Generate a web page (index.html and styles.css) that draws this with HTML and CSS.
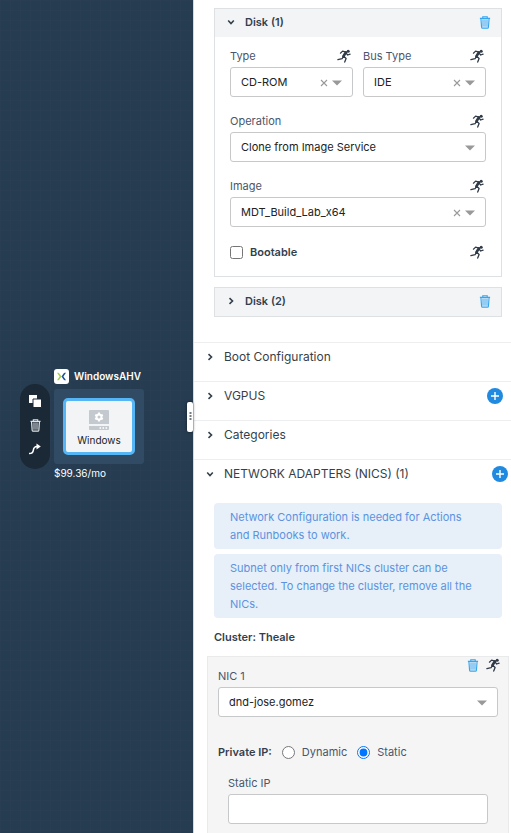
FILE: index.html
```html
<!DOCTYPE html>
<html lang="en">
<head>
<meta charset="utf-8">
<meta name="viewport" content="width=device-width, initial-scale=1">
<title>Blueprint editor</title>
<link rel="stylesheet" href="styles.css">
</head>
<body>
<svg class="sprite" aria-hidden="true">
  <symbol id="trash" viewBox="0 0 12 14">
    <path d="M2.8 3.6h6.4v8H2.8z" fill="currentColor" opacity=".5"/>
    <path d="M.5 2.5h11M3.6 2.3V.8h4.8v1.5M1.6 2.8l.7 9.2q.1 1.1 1.1 1.1h5.2q1 0 1.1-1.1l.7-9.2" fill="none" stroke="currentColor" stroke-width="1.2"/>
  </symbol>
  <symbol id="runner" viewBox="0 0 14 14">
    <circle cx="11.2" cy="2.3" r="1.5" fill="currentColor"/>
    <path d="M3.4 4.2 5.6 2.1 9 3.1" fill="none" stroke="currentColor" stroke-width="1.2" stroke-linecap="round" stroke-linejoin="round"/>
    <path d="M9 3.3 6.4 7.2" fill="none" stroke="currentColor" stroke-width="2.6" stroke-linecap="round"/>
    <path d="M9.3 4.3 10.7 6l2.4-.8M6.4 7.4 5.1 9.7.9 10.6M6.8 7.3l2.3 2.1-1.4 3.7" fill="none" stroke="currentColor" stroke-width="1.3" stroke-linecap="round" stroke-linejoin="round"/>
  </symbol>
  <symbol id="chevron" viewBox="0 0 8 8">
    <path d="M2.5 1.2 5.5 4 2.5 6.8" fill="none" stroke="currentColor" stroke-width="1.6"/>
  </symbol>
  <symbol id="caret" viewBox="0 0 10 6"><path d="M0 .5h10L5 5.5z" fill="currentColor"/></symbol>
  <symbol id="clear" viewBox="0 0 8 8"><path d="m1 1 6 6M7 1 1 7" stroke="currentColor" stroke-width="1.1"/></symbol>
  <symbol id="plus" viewBox="0 0 16 16">
    <circle cx="8" cy="8" r="8" fill="#2089e0"/>
    <path d="M8 4v8M4 8h8" stroke="#fff" stroke-width="1.4"/>
  </symbol>
</svg>

<div class="editor">
  <main class="canvas">
    <div class="node">
      <div class="node-title">
        <svg class="logo" viewBox="0 0 15 15" aria-hidden="true">
          <rect width="15" height="15" rx="3" fill="#fff"/>
          <path d="M3 3.800h1.300q.7 0 1.100.6l2.100 3.100-2.100 3.100q-.4.6-1.100.6H3l2.600-3.700z" fill="#a4cf4c"/>
          <path d="M12 3.800h-1.300q-.7 0-1.100.6L7.500 7.500l2.100 3.100q.4.6 1.100.6H12L9.400 7.500z" fill="#17509c"/>
        </svg>
        <span>WindowsAHV</span>
      </div>
      <div class="toolbar">
        <button type="button" aria-label="Copy"><svg width="14" height="14" viewBox="0 0 14 14"><path d="M1 1h8v8H1z" fill="#fff"/><path d="M5 5h8.500v8.500H5z" fill="#fff" stroke="#1b2836"/></svg></button>
        <button type="button" aria-label="Delete"><svg class="tool-trash"><use href="#trash"/></svg></button>
        <button type="button" aria-label="Connect"><svg width="14" height="12" viewBox="0 0 14 12"><path d="M1 10.500q3.800.1 4.300-3.200Q5.800 3.600 9 3.500" fill="none" stroke="#fff" stroke-width="1.500"/><path d="m8.500.6 4.300 2.900-4.300 2.900z" fill="#fff"/></svg></button>
      </div>
      <div class="card">
        <div class="vm">
          <svg width="20" height="20" viewBox="0 0 20 20" aria-hidden="true">
            <path d="M1 0h18q1 0 1 1v13H0V1q0-1 1-1zM0 16h20v3q0 1-1 1H1q-1 0-1-1z" fill="#c3c9ce"/>
            <circle cx="10" cy="7" r="2.500" fill="none" stroke="#fff" stroke-width="2"/>
            <path d="M10 2.600v1.600M10 9.800v1.600M6.200 4.800l1.400.8M12.400 8.400l1.400.8M6.200 9.200l1.400-.8M12.400 5.600l1.400-.8" stroke="#fff" stroke-width="2"/>
            <path d="M10.500 18h1.600M13.500 18h1.600M16.500 18h1.600" stroke="#fff" stroke-width="1.400"/>
          </svg>
          <span>Windows</span>
        </div>
      </div>
      <span class="price">$99.36/mo</span>
    </div>
    <button class="grip" type="button" aria-label="Resize panel"><svg width="3" height="10" viewBox="0 0 3 10"><path d="M.5 1h2M.5 4h2M.5 7h2" stroke="#747c83" stroke-width="2"/></svg></button>
  </main>

  <aside class="panel">
    <section class="disk">
      <header class="disk-head">
        <button class="toggle" type="button"><svg class="chevron open"><use href="#chevron"/></svg>Disk (1)</button>
        <button class="trash" type="button" aria-label="Delete disk 1"><svg><use href="#trash"/></svg></button>
      </header>
      <div class="disk-body">
        <div class="pair">
          <div class="field">
            <div class="label-row"><label for="type">Type</label><svg class="runner"><use href="#runner"/></svg></div>
            <div class="select"><select id="type"><option>CD-ROM</option></select><button class="clear" type="button" aria-label="Clear type"><svg><use href="#clear"/></svg></button><svg class="caret"><use href="#caret"/></svg></div>
          </div>
          <div class="field">
            <div class="label-row"><label for="bus">Bus Type</label><svg class="runner"><use href="#runner"/></svg></div>
            <div class="select"><select id="bus"><option>IDE</option></select><button class="clear" type="button" aria-label="Clear bus type"><svg><use href="#clear"/></svg></button><svg class="caret"><use href="#caret"/></svg></div>
          </div>
        </div>
        <div class="field">
          <div class="label-row"><label for="operation">Operation</label><svg class="runner"><use href="#runner"/></svg></div>
          <div class="select"><select id="operation"><option>Clone from Image Service</option></select><svg class="caret"><use href="#caret"/></svg></div>
        </div>
        <div class="field">
          <div class="label-row"><label for="image">Image</label><svg class="runner"><use href="#runner"/></svg></div>
          <div class="select"><select id="image"><option>MDT_Build_Lab_x64</option></select><button class="clear" type="button" aria-label="Clear image"><svg><use href="#clear"/></svg></button><svg class="caret"><use href="#caret"/></svg></div>
        </div>
        <div class="label-row boot"><label><input type="checkbox">Bootable</label><svg class="runner"><use href="#runner"/></svg></div>
      </div>
    </section>
    <section class="disk">
      <header class="disk-head">
        <button class="toggle" type="button"><svg class="chevron"><use href="#chevron"/></svg>Disk (2)</button>
        <button class="trash" type="button" aria-label="Delete disk 2"><svg><use href="#trash"/></svg></button>
      </header>
    </section>

    <div class="sections">
      <div class="row"><button class="toggle" type="button"><svg class="chevron"><use href="#chevron"/></svg>Boot Configuration</button></div>
      <div class="row"><button class="toggle" type="button"><svg class="chevron"><use href="#chevron"/></svg>VGPUS</button><button class="add" type="button" aria-label="Add VGPU"><svg><use href="#plus"/></svg></button></div>
      <div class="row"><button class="toggle" type="button"><svg class="chevron"><use href="#chevron"/></svg>Categories</button></div>
      <div class="row wide"><button class="toggle" type="button"><svg class="chevron open"><use href="#chevron"/></svg>NETWORK ADAPTERS (NICS) (1)</button><button class="add" type="button" aria-label="Add network adapter"><svg><use href="#plus"/></svg></button></div>
    </div>

    <div class="notes">
      <p>Network Configuration is needed for Actions and Runbooks to work.</p>
      <p>Subnet only from first NICs cluster can be selected. To change the cluster, remove all the NICs.</p>
    </div>
    <p class="cluster">Cluster: Theale</p>

    <section class="nic">
      <div class="nic-tools"><button class="trash" type="button" aria-label="Delete NIC 1"><svg><use href="#trash"/></svg></button><svg class="runner"><use href="#runner"/></svg></div>
      <label class="nic-label" for="nic">NIC 1</label>
      <div class="select"><select id="nic"><option>dnd-jose.gomez</option></select><svg class="caret"><use href="#caret"/></svg></div>
      <fieldset class="ip">
        <legend>Private IP:</legend>
        <label><input type="radio" name="ip">Dynamic</label>
        <label><input type="radio" name="ip" checked>Static</label>
      </fieldset>
      <div class="static">
        <label for="static-ip">Static IP</label>
        <input id="static-ip" type="text">
      </div>
    </section>
  </aside>
</div>
</body>
</html>
```

FILE: styles.css
```css
* { box-sizing: border-box; }

body {
  margin: 0;
  font: 11px/18px Inter, "Liberation Sans", sans-serif;
  color: #343f4c;
  background: #fff;
}

button, input, select { font: inherit; color: inherit; margin: 0; }
button { padding: 0; border: 0; background: none; display: flex; align-items: center; }
svg { display: block; flex: none; }
p { margin: 0; }
.sprite { position: absolute; width: 0; height: 0; }

.editor {
  display: grid;
  grid-template-columns: minmax(0, 194fr) minmax(0, 317fr);
  min-height: 100vh;
}

/* Canvas */
.canvas {
  position: relative;
  border-right: 1px solid #d5dade;
  background-color: #263c50;
  background-image:
    linear-gradient(#293e52 1px, transparent 1px),
    linear-gradient(90deg, #293e52 1px, transparent 1px);
  background-size: 10px 10px;
}

.node {
  position: absolute;
  left: 20px;
  top: 366px;
  display: grid;
  grid-template-columns: 30px 90px;
  column-gap: 4px;
  color: #fff;
  font-size: 10px;
}
.node-title {
  grid-column: 2;
  display: flex;
  align-items: center;
  gap: 5px;
  height: 20px;
  font-weight: 600;
}
.logo { width: 15px; height: 15px; }
.toolbar {
  grid-column: 1;
  grid-row: 2 / 4;
  display: flex;
  flex-direction: column;
  align-items: center;
  justify-content: space-between;
  height: 85px;
  margin-top: -2px;
  padding: 10px 0 14px;
  border-radius: 15px;
  background: #1b2836;
}
.tool-trash { width: 11px; height: 13px; color: #dfe3e6; }
.card { margin-top: 3px; padding: 9px; height: 75px; border-radius: 3px; background: #304b63; }
.vm {
  display: flex;
  flex-direction: column;
  align-items: center;
  height: 57px;
  padding-top: 9px;
  border: 3px solid #55b5f5;
  border-radius: 5px;
  background: #f2f4f6;
  color: #222;
}
.vm span { line-height: 20px; }
.price { grid-column: 2; }

.grip {
  position: absolute;
  top: 402px;
  right: 0;
  justify-content: center;
  width: 6px;
  height: 30px;
  border-radius: 2px;
  background: #fff;
  box-shadow: 0 0 3px #0008;
}

/* Panel */
.panel { padding-top: 8px; }
.disk { margin: 0 9px 10px 20px; border: 1px solid #dde1e4; }
.disk-head {
  display: flex;
  align-items: center;
  justify-content: space-between;
  height: 28px;
  padding: 0 10px 2px 12px;
  background: #f2f4f6;
  font-weight: 600;
}
.toggle { gap: 10px; }
.chevron { width: 8px; height: 8px; }
.open { transform: rotate(90deg); }
.trash { color: #35a5f0; }
.trash svg { width: 12px; height: 13px; }
.disk-body { padding: 10px 15px 14px; }
.pair { display: grid; grid-template-columns: 1fr 1fr; gap: 10px; }
.field { margin-bottom: 15px; }
.label-row {
  display: flex;
  align-items: center;
  justify-content: space-between;
  height: 20px;
  padding: 0 2px 2px 0;
  color: #4a566a;
}
.runner { width: 14px; height: 14px; color: #303b47; }

.select { position: relative; }
.select select, .static input {
  display: block;
  width: 100%;
  height: 30px;
  padding: 0 10px;
  border: 1px solid #c6c8ca;
  border-radius: 3px;
  background: #fff;
  color: #222;
  appearance: none;
}
.caret { position: absolute; right: 11px; top: 13px; width: 10px; height: 6px; color: #999; pointer-events: none; }
.clear { position: absolute; right: 25px; top: 12px; color: #999; }
.clear svg { width: 8px; height: 8px; }

.boot { padding-bottom: 0; color: #343f4c; }
.boot label { display: flex; align-items: center; gap: 7px; font-weight: 600; }
input[type="checkbox"], input[type="radio"] { width: 13px; height: 13px; }

.sections { margin-top: 25px; }
.row {
  display: flex;
  justify-content: space-between;
  align-items: center;
  height: 39px;
  padding: 0 8px 10px 12px;
  border-top: 1px solid #edeeef;
  font-size: 12px;
}
.wide { padding-right: 3px; }
.add svg { width: 16px; height: 16px; }

.notes { display: grid; gap: 5px; margin: 5px 9px 10px 20px; }
.notes p { padding: 5px 24px 5px 16px; border-radius: 4px; background: #e7eff9; color: #5a93e0; }
.cluster { margin-left: 20px; font-weight: 600; }

.nic {
  position: relative;
  margin: 10px 2px 0 13px;
  padding: 10px;
  border: 1px solid #e8eaeb;
  border-bottom: 0;
  background: #f5f5f5;
}
.nic-tools { position: absolute; top: 1px; right: 8px; display: flex; align-items: center; gap: 7px; }
.nic-label { display: block; height: 20px; color: #4a566a; }
.ip { display: flex; align-items: center; gap: 10px; margin: 25px 0 0; padding: 0; border: 0; height: 20px; }
.ip legend { float: left; padding: 0; font-weight: 600; }
.ip label { display: flex; align-items: center; gap: 7px; color: #4a566a; }
.static { margin: 12px 10px 0; }
.static label { display: block; height: 20px; color: #4a566a; }
```
